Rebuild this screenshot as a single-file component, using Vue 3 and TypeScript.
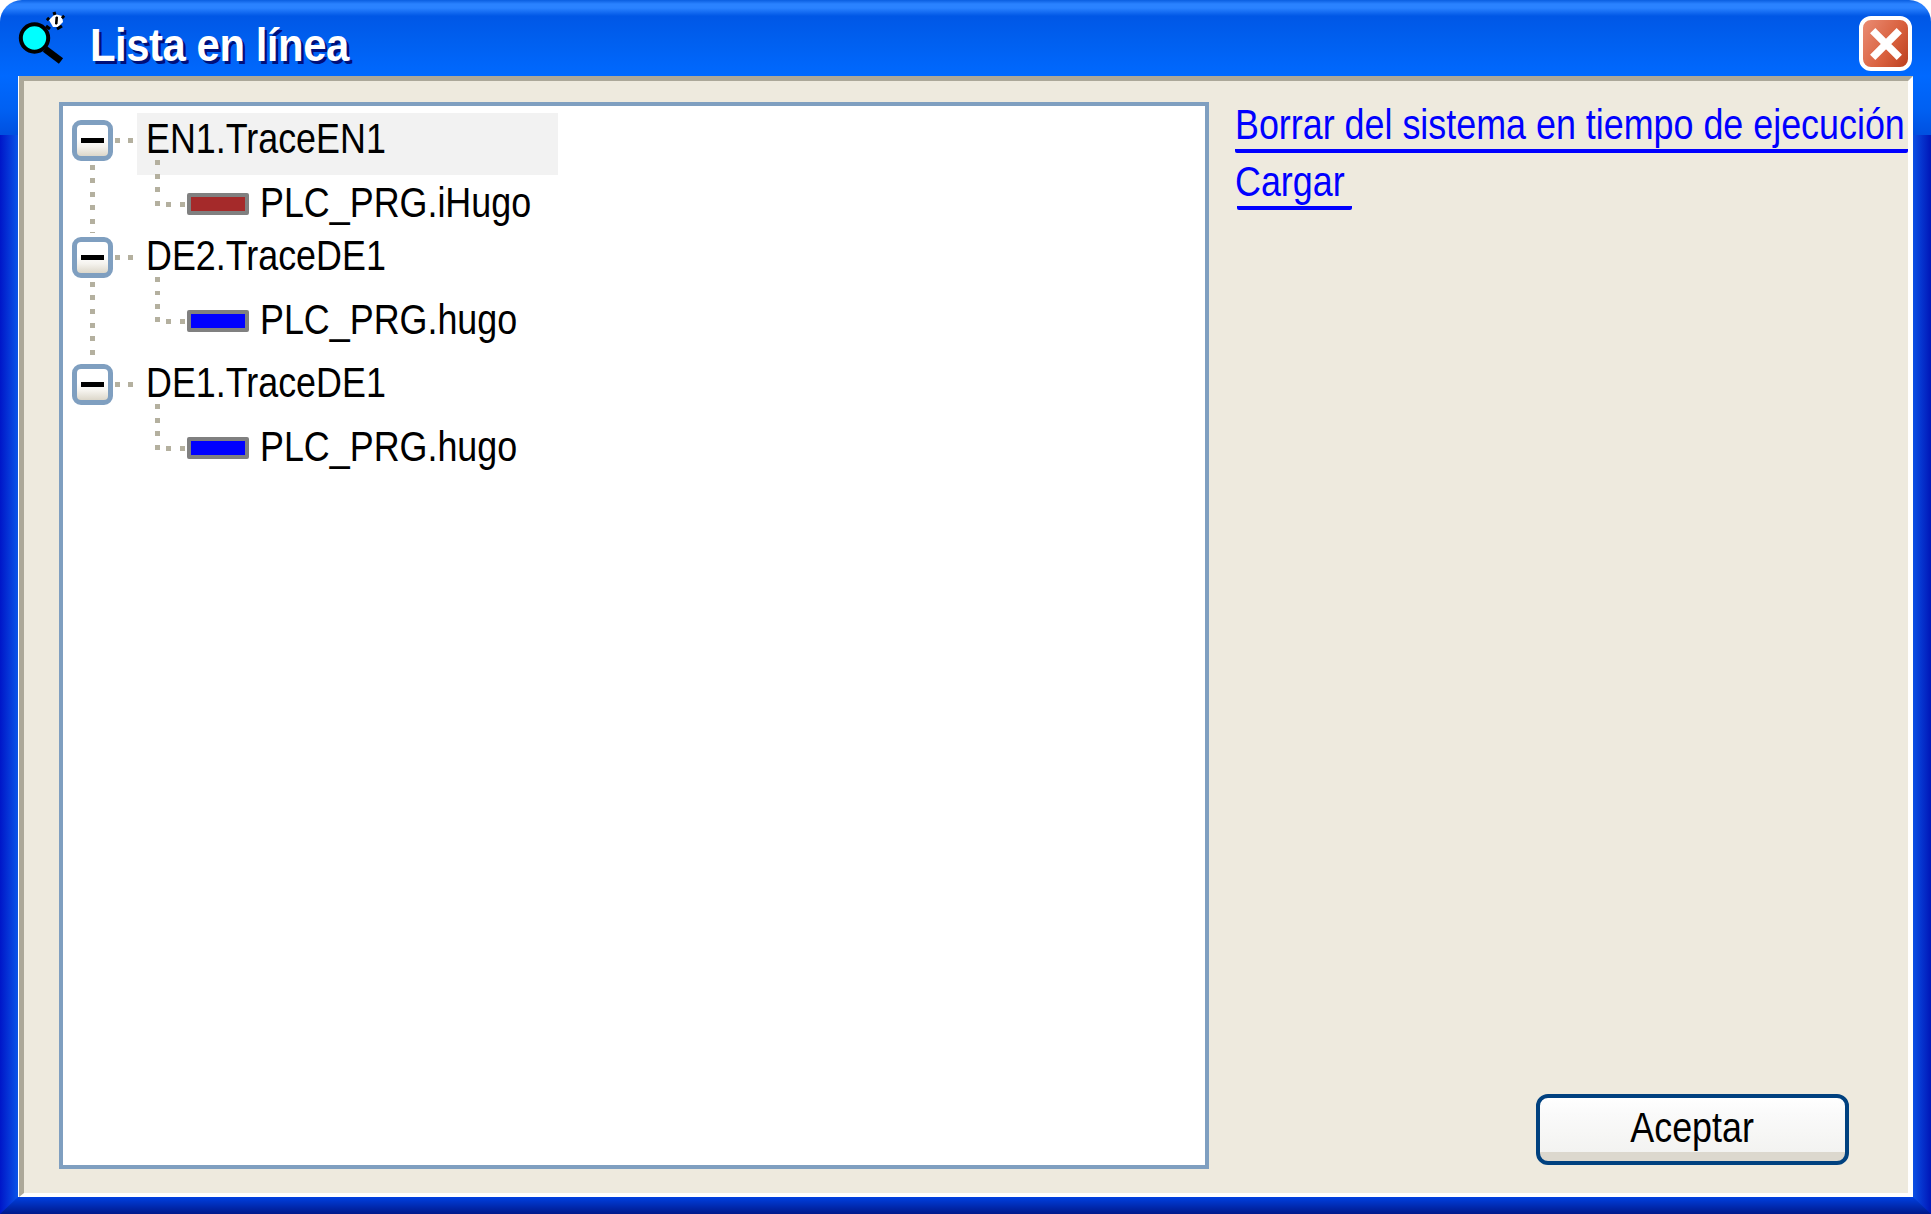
<script setup lang="ts">
interface TraceGroup {
  name: string
  variable: string
  color: string
  spaced: boolean
  selected: boolean
  line: boolean
}

const groups: TraceGroup[] = [
  { name: 'EN1.TraceEN1', variable: 'PLC_PRG.iHugo', color: '#a52a2a', spaced: false, selected: true, line: true },
  { name: 'DE2.TraceDE1', variable: 'PLC_PRG.hugo', color: '#0000ff', spaced: true, selected: false, line: true },
  { name: 'DE1.TraceDE1', variable: 'PLC_PRG.hugo', color: '#0000ff', spaced: false, selected: false, line: false },
]
</script>

<template>
  <div class="window">
    <header class="titlebar">
      <svg class="app-icon" width="70" height="70" viewBox="0 0 70 70">
        <path d="M45 49 L61 61" stroke="#000" stroke-width="7" fill="none" />
        <circle cx="34.5" cy="38" r="13.7" fill="#00ffff" stroke="#000" stroke-width="4" />
        <path d="M49 20 L55 14 L62 16 L63 22 L58 27 L53 27 Z" fill="#fff" />
        <path d="M47 18 L49 20 M53 14 L56 13 M62 16 L64 18 M46 26 L50 29 M57 29 L62 26" stroke="#000" stroke-width="3.2" fill="none" />
        <path d="M56 17 L57.5 17 L57 24 L55.5 24 Z" fill="#000" stroke="#000" />
      </svg>
      <h1 class="title">Lista en línea</h1>
      <button class="close" type="button" aria-label="Cerrar">
        <svg width="32" height="32" viewBox="0 0 30 30">
          <path d="M5 5 L25 25 M25 5 L5 25" stroke="#fff" stroke-width="7" stroke-linecap="square" />
        </svg>
      </button>
    </header>

    <main class="panel">
      <section class="tree">
        <div v-for="g in groups" :key="g.name" class="group" :class="{ spaced: g.spaced }">
          <div class="parent">
            <span class="expander"><i class="minus"></i></span>
            <span class="hdots"></span>
            <span class="label" :class="{ selected: g.selected }"><span class="narrow">{{ g.name }}</span></span>
            <span v-if="g.line" class="trunk"></span>
          </div>
          <div class="child">
            <span class="elbow"></span>
            <span class="swatch" :style="{ background: g.color }"></span>
            <span class="var"><span class="narrow">{{ g.variable }}</span></span>
          </div>
        </div>
      </section>

      <aside class="side">
        <nav class="links">
          <a class="link first"><span class="narrow">Borrar del sistema en tiempo de ejecución</span></a>
          <a class="link second"><span class="narrow">Cargar</span></a>
        </nav>
        <button class="ok" type="button"><span class="narrow center">Aceptar</span></button>
      </aside>
    </main>
  </div>
</template>

<style>
html, body { margin: 0; background: #fff; }
</style>

<style scoped>
.window {
  width: 1931px;
  height: 1214px;
  box-sizing: border-box;
  padding: 0 18px 17px 19px;
  display: flex;
  flex-direction: column;
  border-radius: 22px 22px 0 0;
  overflow: hidden;
  position: relative;
  background:
    linear-gradient(#0a5ee0 0, #2a82ff 4px, #2a82ff 8px, #0057e6 16px, #005fef 40px, #0069ff 76px, #0060f2 110px, #0050e0 135px) 0 0 / 100% 135px no-repeat,
    linear-gradient(90deg, #0016c8, #0a58ea) 0 0 / 19px 100% no-repeat,
    linear-gradient(90deg, #0a50e4, #0016b8) 100% 0 / 18px 100% no-repeat;
}
.window::after {
  content: "";
  position: absolute;
  left: 0;
  right: 0;
  bottom: 0;
  height: 17px;
  background: linear-gradient(#0040e0, #00188a);
  clip-path: polygon(18px 0, calc(100% - 18px) 0, 100% 100%, 0 100%);
}
.titlebar {
  height: 76px;
  flex: none;
  display: flex;
  align-items: flex-start;
  position: relative;
}
.app-icon { flex: none; margin-left: -19px; }
.title {
  margin: 19px 0 0 20px;
  font: bold 47px/52px "Liberation Sans", sans-serif;
  letter-spacing: -0.5px;
  white-space: nowrap;
  color: #fff;
  text-shadow: 3px 3px 0 #00107a;
  transform: scaleX(0.89);
  transform-origin: left center;
}
.close {
  position: absolute;
  right: 1px;
  top: 16px;
  width: 53px;
  height: 55px;
  box-sizing: border-box;
  padding: 0;
  border: 4px solid #fff;
  border-radius: 12px;
  background: linear-gradient(120deg, #ea8c74, #d85f3c 60%, #bb4020);
  display: flex;
  align-items: center;
  justify-content: center;
}
.panel {
  flex: 1;
  min-height: 0;
  box-sizing: border-box;
  display: flex;
  background: #eeeade;
  border-top: 5px solid #aca899;
  border-left: 5px solid #aca899;
  border-right: 5px solid #fff;
  border-bottom: 4px solid #fff;
  padding: 21px 0 24px 35px;
  gap: 26px;
  box-shadow: -1px 0 0 #fff;
}
.tree {
  width: 1150px;
  flex: none;
  box-sizing: border-box;
  background: #fff;
  border: 4px solid #7f9fc0;
  padding: 7px 0 0 9px;
}
.narrow {
  display: inline-block;
  white-space: nowrap;
  transform: scaleX(0.834);
  transform-origin: left center;
}
.narrow.center { transform-origin: center center; }
.group { position: relative; }
.group.spaced { margin-bottom: 10px; }
.parent {
  height: 62px;
  display: flex;
  align-items: flex-start;
  position: relative;
}
.expander {
  width: 41px;
  height: 41px;
  box-sizing: border-box;
  margin-top: 7px;
  flex: none;
  border: 5px solid #7f9fc0;
  border-radius: 9px;
  background: linear-gradient(#fff 45%, #f5f3ee 70%, #dcd7ca);
  display: flex;
  align-items: center;
  justify-content: center;
}
.minus { display: block; width: 23px; height: 5px; background: #000; }
.hdots {
  width: 22px;
  height: 5px;
  margin: 25px 0 0 2px;
  flex: none;
  background: repeating-linear-gradient(90deg, #b4b09f 0 5px, transparent 5px 13.5px);
}
.label {
  width: 421px;
  height: 62px;
  box-sizing: border-box;
  padding-left: 9px;
  font: 43px/50px "Liberation Sans", sans-serif;
  color: #000;
}
.label.selected { background: #f2f2f2; }
.trunk {
  position: absolute;
  left: 18px;
  top: 52px;
  width: 5px;
  height: 68px;
  background: repeating-linear-gradient(#b4b09f 0 5px, transparent 5px 13.5px);
}
.group.spaced .trunk { height: 75px; }
.child {
  height: 55px;
  display: flex;
  align-items: center;
  padding-top: 3px;
  box-sizing: border-box;
  padding-left: 115px;
  position: relative;
}
.elbow {
  position: absolute;
  left: 83px;
  top: -15px;
  width: 30px;
  height: 47px;
  background:
    repeating-linear-gradient(#b4b09f 0 5px, transparent 5px 13.5px) 0 0 / 5px 100% no-repeat,
    repeating-linear-gradient(90deg, #b4b09f 0 5px, transparent 5px 13.5px) 11px 100% / 19px 5px no-repeat;
}
.swatch {
  width: 62px;
  height: 22px;
  box-sizing: border-box;
  border: 4px solid #808080;
  border-radius: 2px;
  flex: none;
}
.var {
  margin: -5px 0 0 11px;
  font: 43px/50px "Liberation Sans", sans-serif;
  color: #000;
}
.side {
  flex: 1;
  min-width: 0;
  display: flex;
  flex-direction: column;
  justify-content: space-between;
  position: relative;
}
.links { display: flex; flex-direction: column; align-items: flex-start; margin-top: -3px; }
.link {
  font: 43px/50px "Liberation Sans", sans-serif;
  color: #0000ff;
  display: block;
  white-space: nowrap;
}
.first {
  width: 673px;
  height: 54px;
  box-sizing: border-box;
  border-bottom: 4px solid #0000ff;
  border-radius: 2px;
}
.second {
  width: 115px;
  height: 54px;
  margin: 3px 0 0 2px;
  box-sizing: border-box;
  border-bottom: 4px solid #0000ff;
  border-radius: 2px;
}
.second .narrow { margin-left: -2px; }
.ok {
  align-self: flex-end;
  margin-right: 59px;
  margin-bottom: 4px;
  width: 313px;
  height: 71px;
  box-sizing: border-box;
  border: 4px solid #00417f;
  border-radius: 12px;
  background: linear-gradient(#fff, #fafafa 25%, #f3f3f1 85%, #dcd8ce 85%);
  font: 43px/50px "Liberation Sans", sans-serif;
  color: #000;
  padding: 0 0 6px;
}
</style>
